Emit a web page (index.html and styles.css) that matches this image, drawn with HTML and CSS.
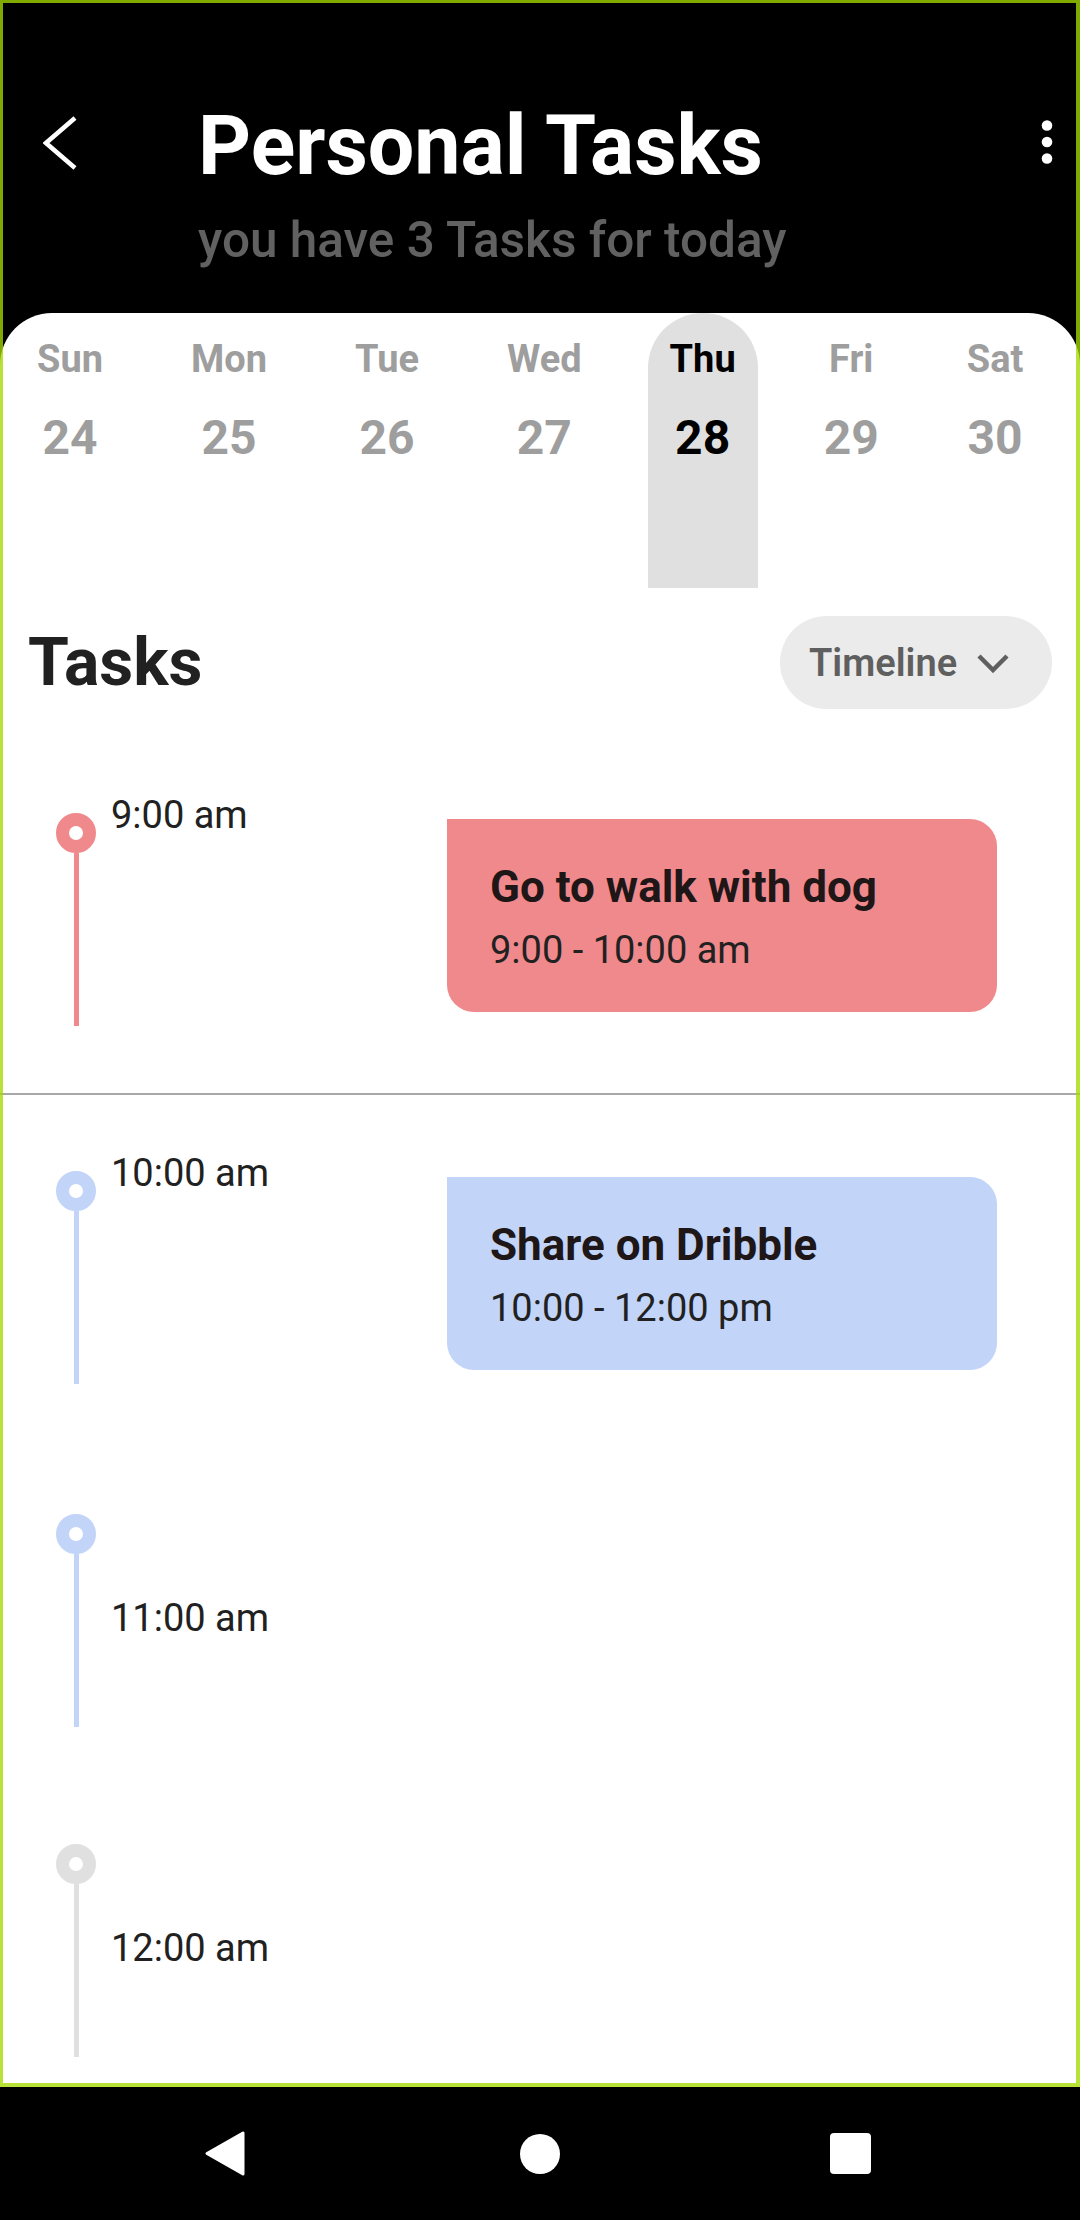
FILE: index.html
```html
<!DOCTYPE html>
<html lang="en">
<head>
<meta charset="utf-8">
<title>Personal Tasks</title>
<link rel="stylesheet" href="styles.css">
</head>
<body>
<div class="screen">
  <header class="header">
    <svg class="back" viewBox="0 0 34 56" width="34" height="56"><polyline points="32,3 3,28 32,53" fill="none" stroke="#fff" stroke-width="4.5"/></svg>
    <div class="titles">
      <h1 class="title">Personal Tasks</h1>
      <p class="subtitle">you have 3 Tasks for today</p>
    </div>
    <svg class="more" viewBox="0 0 12 46" width="12" height="46"><circle cx="6" cy="5.5" r="5.3" fill="#fff"/><circle cx="6" cy="22" r="5.3" fill="#fff"/><circle cx="6" cy="38.5" r="5.3" fill="#fff"/></svg>
  </header>
  <main class="panel">
    <div class="days">
      <div class="day"><span class="dname">Sun</span><span class="dnum">24</span></div>
      <div class="day"><span class="dname">Mon</span><span class="dnum">25</span></div>
      <div class="day"><span class="dname">Tue</span><span class="dnum">26</span></div>
      <div class="day"><span class="dname">Wed</span><span class="dnum">27</span></div>
      <div class="day active"><span class="dname">Thu</span><span class="dnum">28</span></div>
      <div class="day"><span class="dname">Fri</span><span class="dnum">29</span></div>
      <div class="day"><span class="dname">Sat</span><span class="dnum">30</span></div>
    </div>
    <div class="tasks-head">
      <h2 class="tasks-title">Tasks</h2>
      <div class="pill"><span>Timeline</span><svg class="chev" viewBox="0 0 32 20" width="32" height="20"><polyline points="2,3 16,17 30,3" fill="none" stroke="#5f5f5f" stroke-width="4.5"/></svg></div>
    </div>

    <div class="row red">
      <div class="rail"><div class="dot"></div><div class="stem"></div></div>
      <div class="time">9:00 am</div>
      <div class="card">
        <div class="card-title">Go to walk with dog</div>
        <div class="card-time">9:00 - 10:00 am</div>
      </div>
    </div>
    <hr class="divider">
    <div class="row blue">
      <div class="rail"><div class="dot"></div><div class="stem"></div></div>
      <div class="time">10:00 am</div>
      <div class="card">
        <div class="card-title">Share on Dribble</div>
        <div class="card-time">10:00 - 12:00 pm</div>
      </div>
    </div>
    <div class="row blue mid r3">
      <div class="rail"><div class="dot"></div><div class="stem"></div></div>
      <div class="time">11:00 am</div>
    </div>
    <div class="row gray mid r4">
      <div class="rail"><div class="dot"></div><div class="stem"></div></div>
      <div class="time">12:00 am</div>
    </div>
  </main>
  <div class="frame"></div>
</div>
<nav class="navbar">
  <svg class="nav-back" viewBox="0 0 42 47" width="42" height="47"><path d="M39,3 L39,44 L3,23.5 Z" fill="#fff" stroke="#fff" stroke-width="3" stroke-linejoin="round"/></svg>
  <span class="nav-home"></span>
  <span class="nav-recent"></span>
</nav>
</body>
</html>
```
FILE: styles.css
```css
* { box-sizing: border-box; }
html, body { margin: 0; padding: 0; }
body {
  width: 1080px;
  background: #000;
  font-family: Roboto, "Noto Sans", "Liberation Sans", sans-serif;
  color: #212121;
}
.screen {
  position: relative;
  height: 2087px;
  display: flex;
  flex-direction: column;
  background: #000;
  overflow: hidden;
}
.header {
  height: 313px;
  flex: none;
  display: flex;
  align-items: flex-start;
}
.back { margin: 115px 0 0 43px; flex: none; }
.titles { margin-left: 121px; padding-top: 98px; }
.title {
  margin: 0;
  font-size: 82.5px;
  line-height: 96px;
  font-weight: 700;
  color: #fff;
}
.subtitle {
  margin: 18px 0 0 0;
  font-size: 49.5px;
  line-height: 56px;
  font-weight: 500;
  color: #616161;
}
.more { margin: 120px 27px 0 auto; flex: none; }

.panel {
  flex: 1;
  background: #fff;
  border-radius: 52px 52px 0 0;
}
.days {
  display: flex;
  gap: 44px;
  padding-left: 15px;
}
.day {
  height: 275px;
  padding: 24px 22px 0;
  display: flex;
  flex-direction: column;
  align-items: center;
  color: #9e9e9e;
  font-weight: 700;
}
.day.active {
  background: #e0e0e0;
  border-radius: 56px 56px 0 0;
  color: #000;
}
.dname { font-size: 38px; line-height: 44px; }
.dnum { font-size: 48px; line-height: 56px; margin-top: 29px; }

.tasks-head {
  margin-top: 28px;
  padding: 0 28px;
  display: flex;
  justify-content: space-between;
  align-items: center;
}
.tasks-title {
  margin: 0;
  font-size: 66px;
  line-height: 78px;
  font-weight: 700;
  color: #212121;
}
.pill {
  width: 272px;
  height: 93px;
  border-radius: 47px;
  background: #ebebeb;
  display: flex;
  align-items: center;
  padding-left: 29px;
  gap: 20px;
  font-size: 38px;
  line-height: 44px;
  font-weight: 600;
  color: #5f5f5f;
}
.chev { flex: none; }

.row {
  display: flex;
  align-items: flex-start;
  padding-left: 56px;
  margin-top: 84px;
}
.rail {
  width: 40px;
  flex: none;
  display: flex;
  flex-direction: column;
  align-items: center;
  margin-top: 20px;
}
.dot {
  width: 40px;
  height: 40px;
  border-radius: 50%;
  border: 13.5px solid var(--c);
  background: #fff;
}
.stem { width: 5px; height: 173px; background: var(--c); }
.time {
  margin-left: 15px;
  font-size: 38px;
  line-height: 44px;
  color: #212121;
}
.card {
  width: 550px;
  height: 193px;
  margin: 26px 83px 0 auto;
  border-radius: 0 27px 27px 27px;
  background: var(--c);
  padding: 42px 0 0 43px;
}
.card-title {
  font-size: 44px;
  line-height: 52px;
  font-weight: 700;
  color: #1e1617;
}
.card-time {
  margin-top: 15px;
  font-size: 38px;
  line-height: 44px;
  color: #212121;
}
.red { --c: #f0898c; }
.blue { --c: #c2d4f8; }
.gray { --c: #e0e0e0; }

.divider {
  margin: 67px 0 0 0;
  border: 0;
  height: 2px;
  background: #a8a8a8;
}
.divider + .row { margin-top: 56px; }
.row.mid { align-items: center; }
.row.mid .rail { margin-top: 0; }
.row.mid .time { margin-bottom: 5px; }
.row.r3 { margin-top: 130px; }
.row.r4 { margin-top: 117px; }

.frame {
  position: absolute;
  inset: 0;
  border-style: solid;
  border-color: rgba(164, 218, 0, 0.78);
  border-width: 3px 4px 4px 3px;
  pointer-events: none;
}

.navbar {
  height: 133px;
  display: flex;
  align-items: center;
  padding-left: 204px;
}
.nav-back { flex: none; }
.nav-home {
  width: 40px;
  height: 40px;
  border-radius: 50%;
  background: #fff;
  margin-left: 274px;
}
.nav-recent {
  width: 41px;
  height: 41px;
  border-radius: 4px;
  background: #fff;
  margin-left: 270px;
}
```
